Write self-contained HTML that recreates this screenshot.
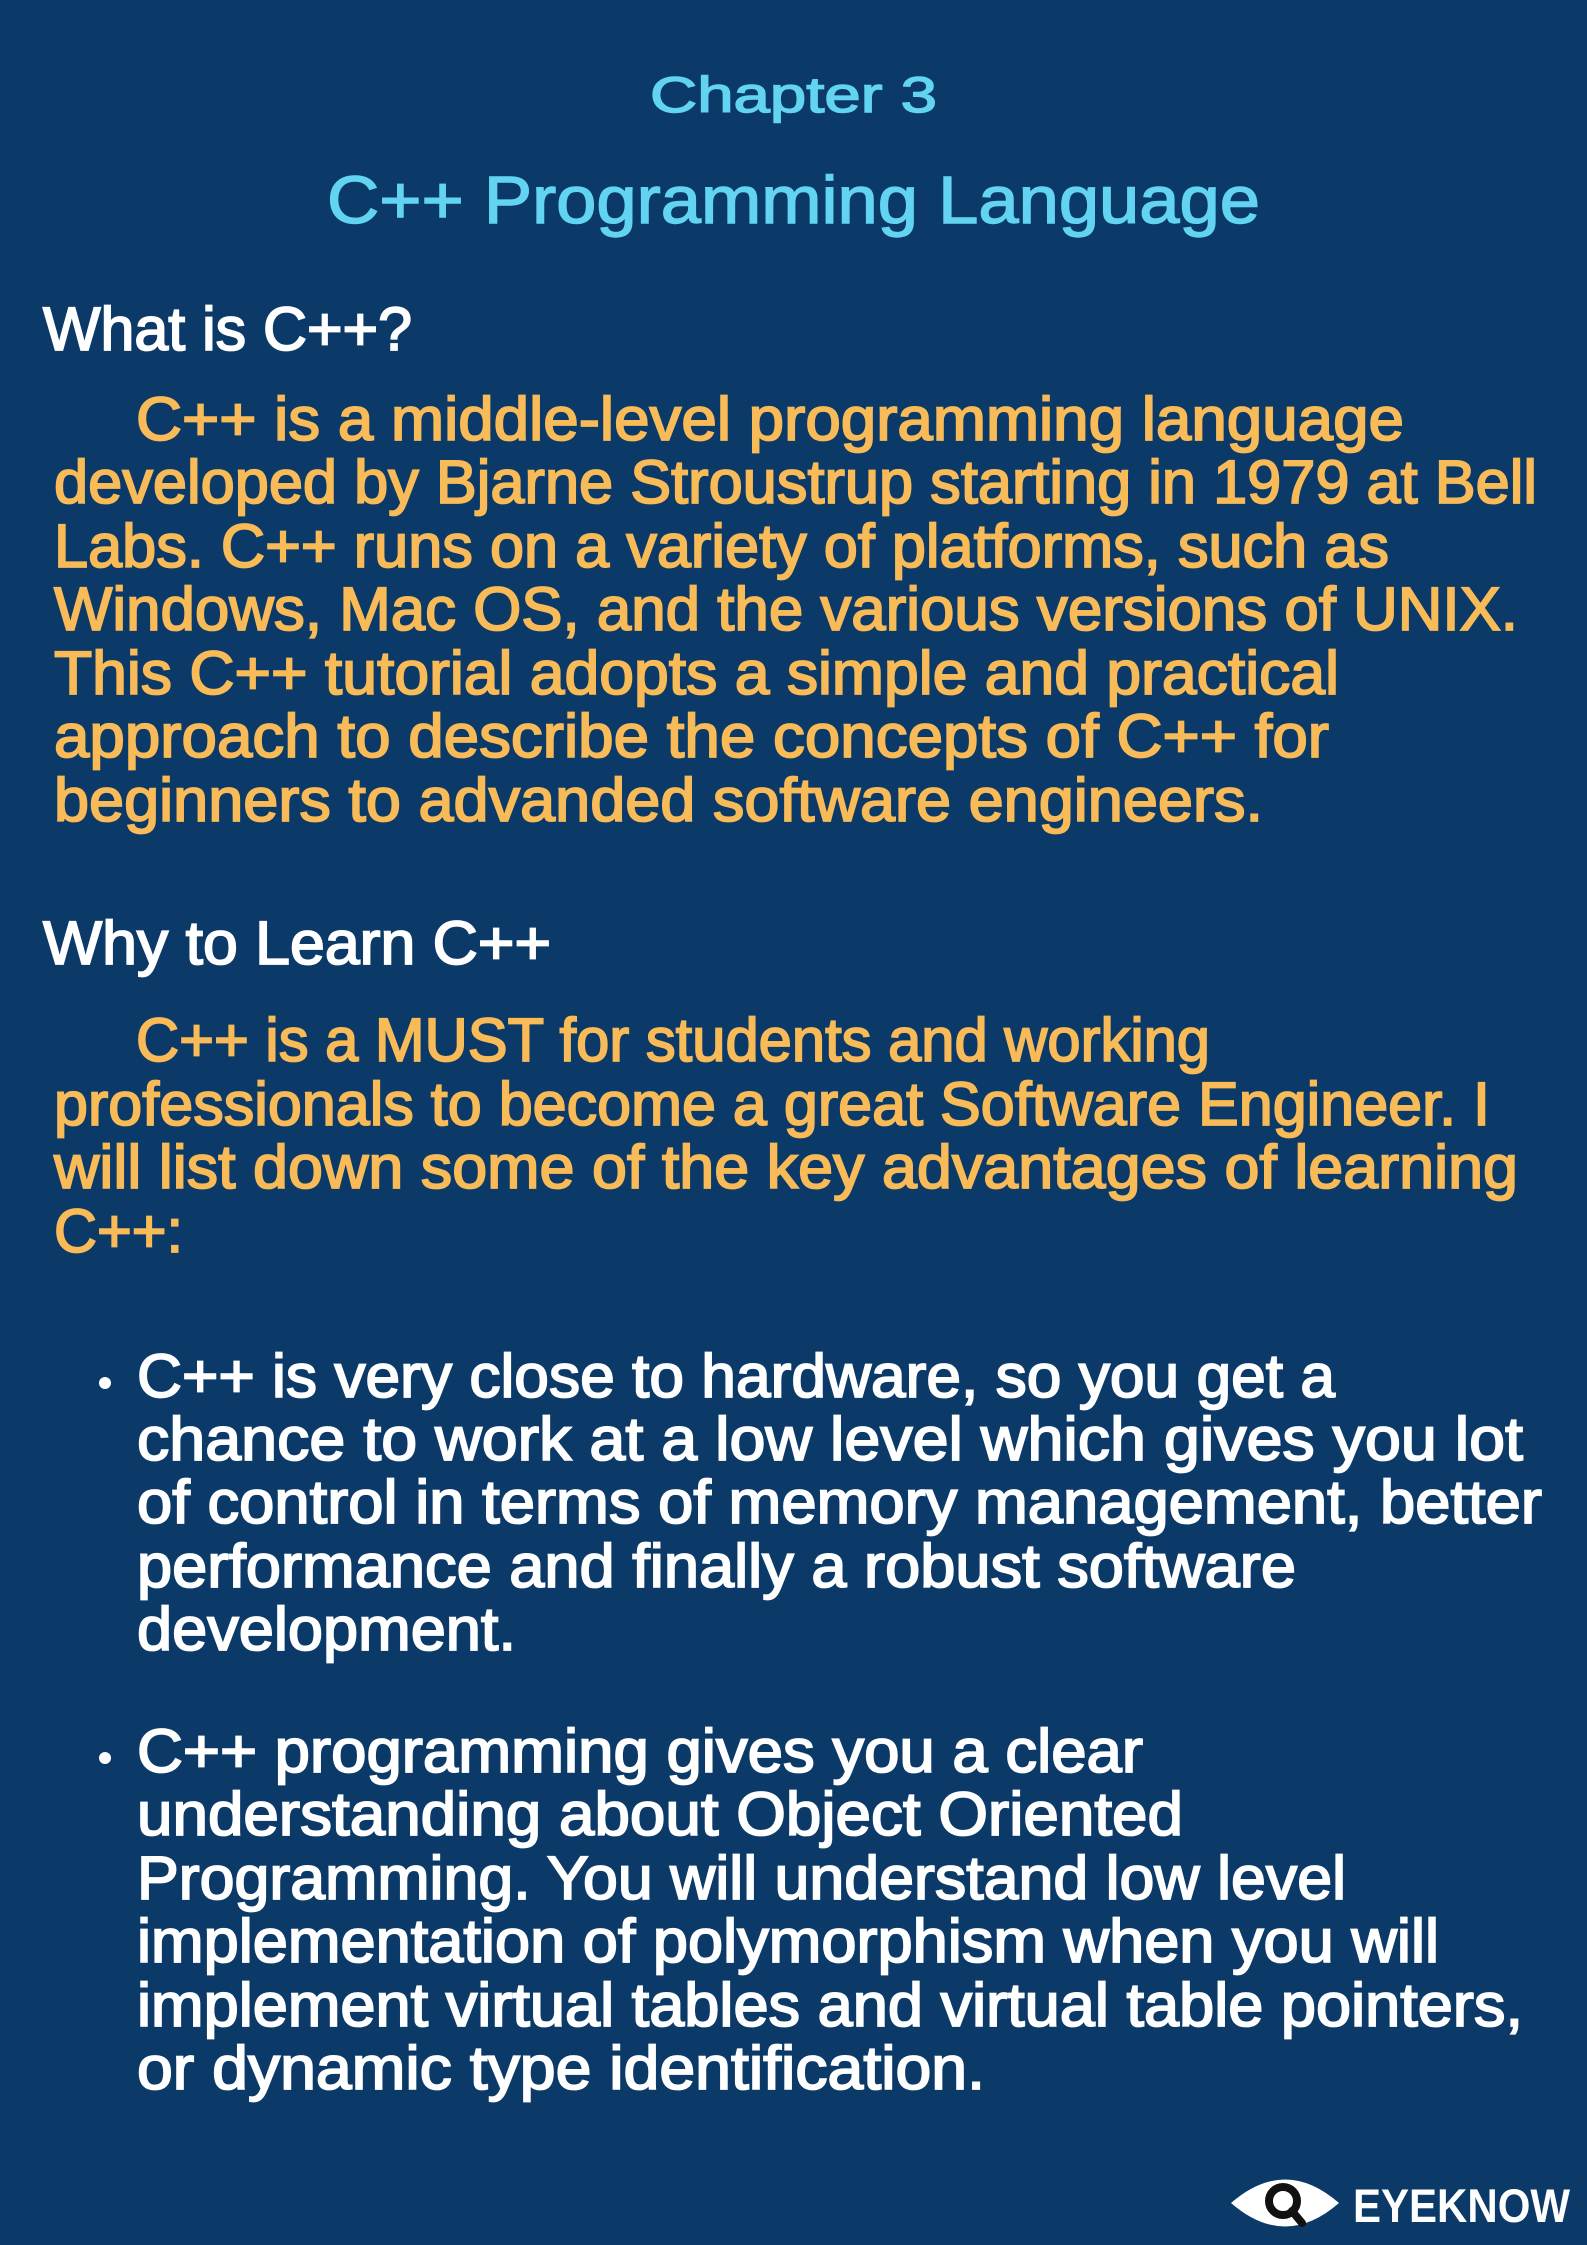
<!DOCTYPE html>
<html><head><meta charset="utf-8"><style>
html,body{margin:0;padding:0;background:#0b3a68;}
svg{display:block}
text{font-family:"Liberation Sans",sans-serif;}
.o{fill:#f8bb58;stroke:#f8bb58;stroke-width:1.8;font-size:61px}
.w{fill:#ffffff;stroke:#ffffff;stroke-width:1.8;font-size:61px}
.c{fill:#62d4f2;stroke:#62d4f2;stroke-width:1.4}
</style></head><body>
<svg width="1587" height="2245" viewBox="0 0 1587 2245" xmlns="http://www.w3.org/2000/svg">
<rect width="1587" height="2245" fill="#0b3a68"/>
<text class="c" x="650" y="112" font-size="50" textLength="287" lengthAdjust="spacingAndGlyphs">Chapter 3</text>
<text class="c" x="327" y="223" font-size="67" textLength="933" lengthAdjust="spacingAndGlyphs">C++ Programming Language</text>

<text class="w" x="43" y="350" textLength="369" lengthAdjust="spacingAndGlyphs">What is C++?</text>
<text class="o" x="136" y="440" textLength="1268" lengthAdjust="spacingAndGlyphs">C++ is a middle-level programming language</text>
<text class="o" x="54" y="503" textLength="1483" lengthAdjust="spacingAndGlyphs">developed by Bjarne Stroustrup starting in 1979 at Bell</text>
<text class="o" x="54" y="567" textLength="1335" lengthAdjust="spacingAndGlyphs">Labs. C++ runs on a variety of platforms, such as</text>
<text class="o" x="54" y="630" textLength="1464" lengthAdjust="spacingAndGlyphs">Windows, Mac OS, and the various versions of UNIX.</text>
<text class="o" x="54" y="694" textLength="1285" lengthAdjust="spacingAndGlyphs">This C++ tutorial adopts a simple and practical</text>
<text class="o" x="54" y="757" textLength="1275" lengthAdjust="spacingAndGlyphs">approach to describe the concepts of C++ for</text>
<text class="o" x="54" y="821" textLength="1209" lengthAdjust="spacingAndGlyphs">beginners to advanded software engineers.</text>

<text class="w" x="43" y="964" textLength="508" lengthAdjust="spacingAndGlyphs">Why to Learn C++</text>
<text class="o" x="136" y="1061" textLength="1074" lengthAdjust="spacingAndGlyphs">C++ is a MUST for students and working</text>
<text class="o" x="54" y="1125" textLength="1436" lengthAdjust="spacingAndGlyphs">professionals to become a great Software Engineer. I</text>
<text class="o" x="54" y="1188" textLength="1464" lengthAdjust="spacingAndGlyphs">will list down some of the key advantages of learning</text>
<text class="o" x="54" y="1252" textLength="129" lengthAdjust="spacingAndGlyphs">C++:</text>

<circle cx="105" cy="1383" r="6" fill="#fff"/>
<text class="w" x="137" y="1397" textLength="1198" lengthAdjust="spacingAndGlyphs">C++ is very close to hardware, so you get a</text>
<text class="w" x="137" y="1460" textLength="1386" lengthAdjust="spacingAndGlyphs">chance to work at a low level which gives you lot</text>
<text class="w" x="137" y="1523" textLength="1405" lengthAdjust="spacingAndGlyphs">of control in terms of memory management, better</text>
<text class="w" x="137" y="1587" textLength="1159" lengthAdjust="spacingAndGlyphs">performance and finally a robust software</text>
<text class="w" x="137" y="1650" textLength="379" lengthAdjust="spacingAndGlyphs">development.</text>

<circle cx="105" cy="1758" r="6" fill="#fff"/>
<text class="w" x="137" y="1772" textLength="1006" lengthAdjust="spacingAndGlyphs">C++ programming gives you a clear</text>
<text class="w" x="137" y="1835" textLength="1046" lengthAdjust="spacingAndGlyphs">understanding about Object Oriented</text>
<text class="w" x="137" y="1899" textLength="1209" lengthAdjust="spacingAndGlyphs">Programming. You will understand low level</text>
<text class="w" x="137" y="1962" textLength="1302" lengthAdjust="spacingAndGlyphs">implementation of polymorphism when you will</text>
<text class="w" x="137" y="2026" textLength="1386" lengthAdjust="spacingAndGlyphs">implement virtual tables and virtual table pointers,</text>
<text class="w" x="137" y="2089" textLength="848" lengthAdjust="spacingAndGlyphs">or dynamic type identification.</text>

<path d="M1231 2203 Q1285 2156 1339 2203 Q1285 2250 1231 2203 Z" fill="#fff"/>
<circle cx="1283" cy="2201" r="14" fill="#fff" stroke="#111" stroke-width="8"/>
<line x1="1292" y1="2211" x2="1302" y2="2223" stroke="#111" stroke-width="8" stroke-linecap="round"/>
<text x="1353" y="2222" font-size="47" font-weight="bold" fill="#fff" textLength="217" lengthAdjust="spacingAndGlyphs">EYEKNOW</text>
</svg>
</body></html>
